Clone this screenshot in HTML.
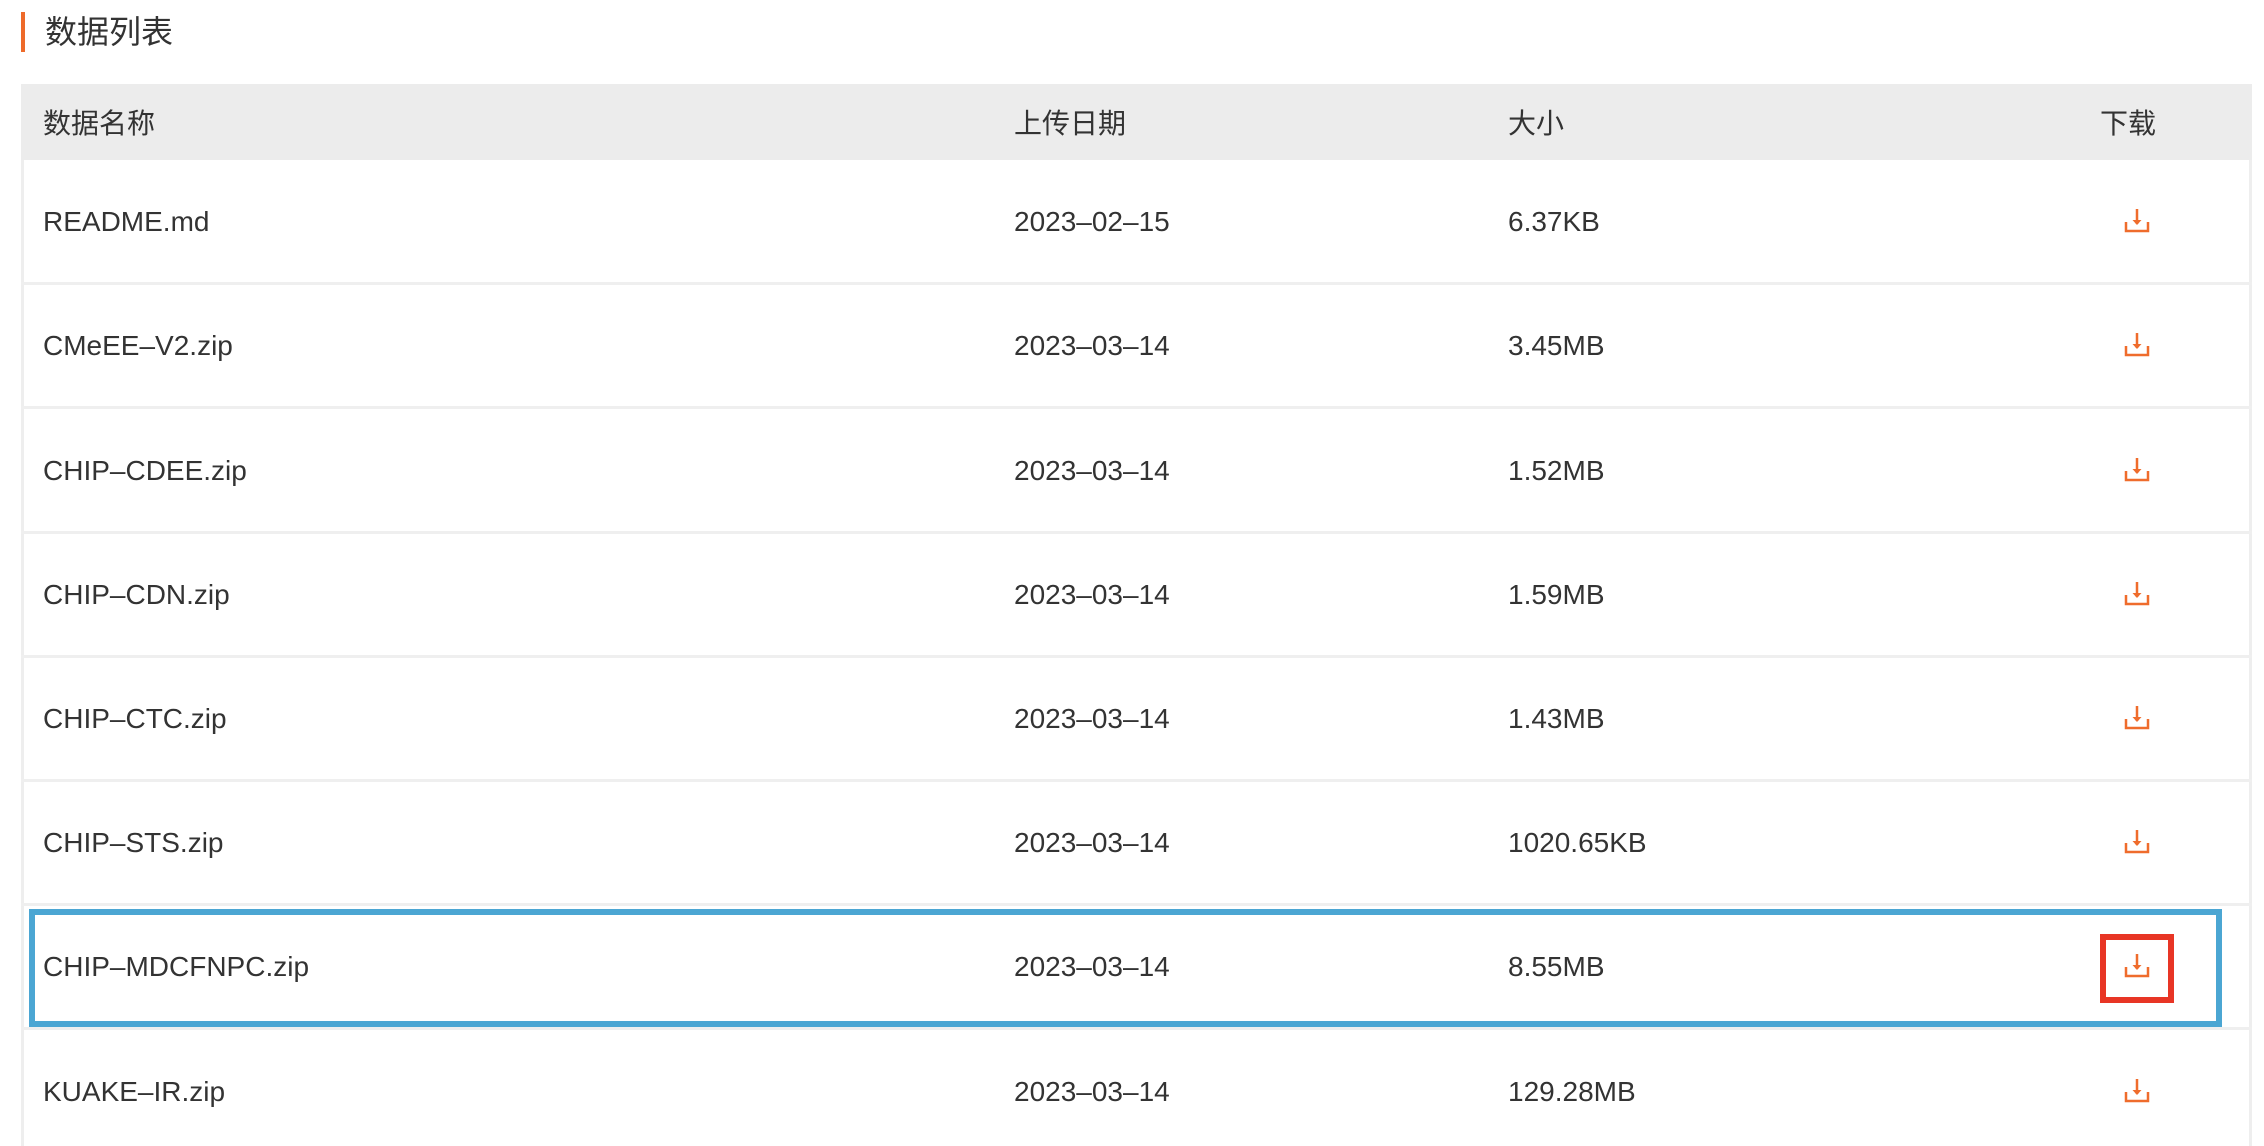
<!DOCTYPE html>
<html><head><meta charset="utf-8"><style>
*{margin:0;padding:0;box-sizing:border-box}
body{width:2264px;height:1146px;background:#fff;position:relative;overflow:hidden;font-family:"Liberation Sans","Noto Sans CJK SC",sans-serif;color:#333}
.t{position:absolute;font-size:28px;line-height:30px;white-space:nowrap}
.bar{position:absolute;left:21px;top:12px;width:4px;height:40px;background:#ee6a2a}
.title{position:absolute;left:45px;top:11px;font-size:32px;line-height:42px;color:#333}
.hdr{position:absolute;left:21px;top:84px;width:2231px;height:76px;background:#ececec}
.tbl{position:absolute;left:21px;top:84px;width:2231px;height:1062px;border-left:3px solid #eee;border-right:3px solid #eee}
.sep{position:absolute;left:21px;width:2231px;height:3px;background:#efefef}
svg{position:absolute}
</style></head><body>
<div class="bar"></div>
<div class="title">数据列表</div>
<div class="tbl"></div>
<div class="hdr"></div>
<div class="t" style="left:43px;top:109px">数据名称</div>
<div class="t" style="left:1014px;top:109px">上传日期</div>
<div class="t" style="left:1508px;top:109px">大小</div>
<div class="t" style="left:2100px;top:109px">下载</div>
<div id="rows"></div>
<script>
var d=[["README.md","2023-02-15","6.37KB"],["CMeEE-V2.zip","2023-03-14","3.45MB"],["CHIP-CDEE.zip","2023-03-14","1.52MB"],["CHIP-CDN.zip","2023-03-14","1.59MB"],["CHIP-CTC.zip","2023-03-14","1.43MB"],["CHIP-STS.zip","2023-03-14","1020.65KB"],["CHIP-MDCFNPC.zip","2023-03-14","8.55MB"],["KUAKE-IR.zip","2023-03-14","129.28MB"]];
var h="";
for(var i=0;i<d.length;i++){
 var c=159+124.2*(i+0.5);
 if(i>0)h+='<div class="sep" style="top:'+(159+124.2*i-1)+'px"></div>';
 var y=c-14;
 h+='<div class="t" style="left:43px;top:'+y+'px">'+d[i][0].replace(/-/g,'\u2013')+'</div>';
 h+='<div class="t" style="left:1014px;top:'+y+'px">'+d[i][1].replace(/-/g,'\u2013')+'</div>';
 h+='<div class="t" style="left:1508px;top:'+y+'px">'+d[i][2]+'</div>';
 h+='<svg style="left:2124px;top:'+(c-12)+'px" width="26" height="24" viewBox="0 0 26 24"><path d="M13 0V15" stroke="#ef6c2c" stroke-width="2.5" fill="none"/><path d="M8.5 11L13 16L17.5 11Z" fill="#ef6c2c"/><path d="M2 13V22H24V13" stroke="#ef6c2c" stroke-width="2.5" fill="none"/></svg>';
}
document.getElementById('rows').innerHTML=h;
</script>
<div style="position:absolute;left:29px;top:909px;width:2193px;height:118px;border:6px solid #4ba6d3"></div>
<div style="position:absolute;left:2100px;top:934px;width:74px;height:69px;border:6px solid #e83525"></div>
</body></html>
